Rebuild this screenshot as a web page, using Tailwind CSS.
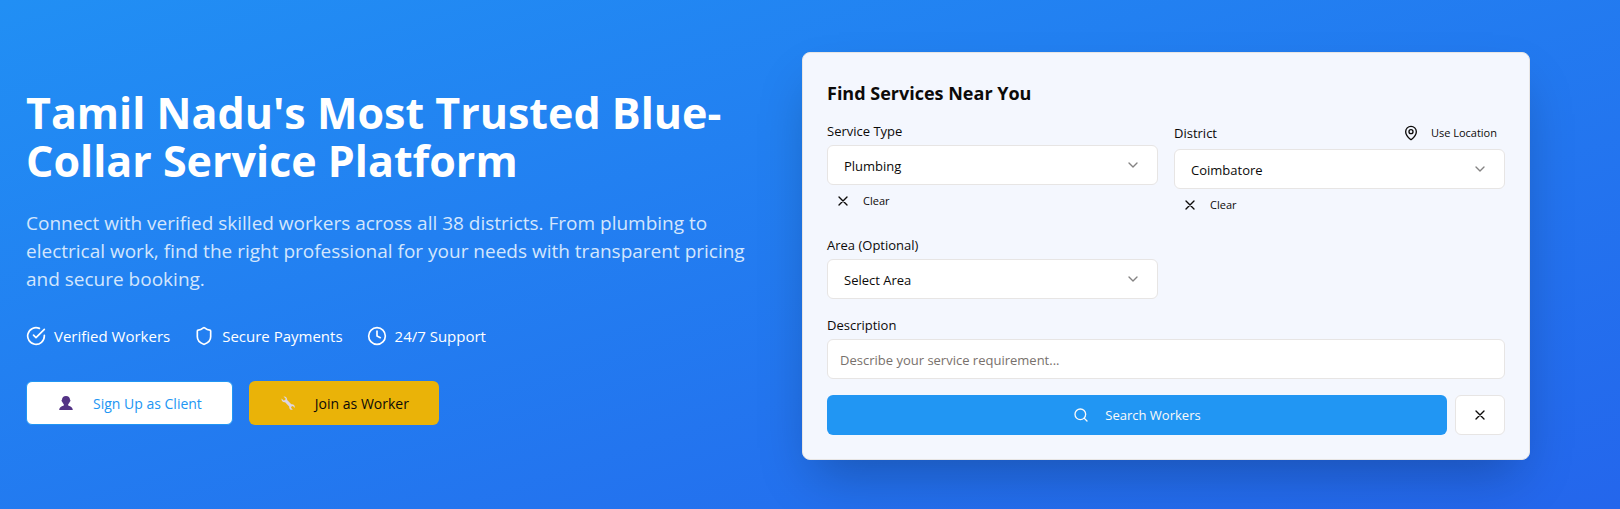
<!DOCTYPE html>
<html lang="en">
<head>
<meta charset="utf-8">
<meta name="viewport" content="width=device-width, initial-scale=1">
<title>Find Services Near You</title>
<script src="https://cdn.jsdelivr.net/npm/@tailwindcss/browser@4"></script>
</head>
<body class="font-['Segoe_UI','Open_Sans',sans-serif] text-[#0c0a09]">
<section class="grid min-h-screen items-center gap-12 bg-linear-to-br/srgb from-[#218ff4] to-[#2466ec] pt-[52px] pr-[90px] pb-[49px] pl-[26px] lg:grid-cols-2">
  <div>
    <h1 class="mb-6 pt-0.5 text-[43px] leading-[48px] font-bold text-white">Tamil Nadu's Most Trusted Blue-Collar Service Platform</h1>
    <p class="mb-[30px] text-[19px] leading-7 text-[#d3e6fd]">Connect with verified skilled workers across all 38 districts. From plumbing to electrical work, find the right professional for your needs with transparent pricing and secure booking.</p>
    <ul class="mb-8 flex flex-wrap gap-6 text-[15px] leading-[26px] text-white">
      <li class="flex items-center gap-2">
        <svg class="size-5 shrink-0" viewBox="0 0 24 24" fill="none" stroke="currentColor" stroke-width="2" stroke-linecap="round" stroke-linejoin="round" aria-hidden="true"><path d="M22 11.08V12a10 10 0 1 1-5.93-9.14"/><path d="m9 11 3 3L22 4"/></svg>
        Verified Workers
      </li>
      <li class="flex items-center gap-2">
        <svg class="size-5 shrink-0" viewBox="0 0 24 24" fill="none" stroke="currentColor" stroke-width="2" stroke-linecap="round" stroke-linejoin="round" aria-hidden="true"><path d="M20 13c0 5-3.5 7.5-7.66 8.95a1 1 0 0 1-.67-.01C7.5 20.5 4 18 4 13V6a1 1 0 0 1 1-1c2 0 4.5-1.2 6.24-2.72a1.17 1.17 0 0 1 1.52 0C14.51 3.81 17 5 19 5a1 1 0 0 1 1 1z"/></svg>
        Secure Payments
      </li>
      <li class="flex items-center gap-2">
        <svg class="size-5 shrink-0" viewBox="0 0 24 24" fill="none" stroke="currentColor" stroke-width="2" stroke-linecap="round" stroke-linejoin="round" aria-hidden="true"><circle cx="12" cy="12" r="10"/><path d="M12 6v6l4 2"/></svg>
        24/7 Support
      </li>
    </ul>
    <div class="flex flex-wrap gap-4 text-[14px]">
      <button type="button" class="flex h-11 items-center gap-[18px] rounded-md border border-[#2196f3] bg-white px-[30px] text-[#2196f3]">
        <svg class="h-[18px] w-[18px]" viewBox="0 0 18 18" aria-hidden="true"><path fill="#533285" d="M9 2C6.5 2 5 3.600 5 5.800c-.6.1-.7 1.600.3 2.100.3 1 .9 1.800 1.500 2.300v1.200C5.500 12.300 2.500 12.200 2.200 16h13.600c-.3-3.800-3.300-3.700-4.600-4.600v-1.200c.6-.5 1.200-1.300 1.500-2.300 1-.5.9-2 .3-2.100C13 3.600 11.500 2 9 2z"/></svg>
        Sign Up as Client
      </button>
      <button type="button" class="flex h-11 items-center gap-[18px] rounded-md bg-[#eab308] px-[30px] text-[#0c0a09]">
        <svg class="h-[18px] w-[18px]" viewBox="0 0 18 18" aria-hidden="true"><path fill="#ddd5e3" d="M4.500 2.600 6.700 4.700 6.100 6.100 4.600 6.500 2.600 4.500C2 6.500 3.600 8.500 6.100 8.200L10.200 12.400C9.900 14.600 11.600 16.300 13.800 15.700L12 13.800 12.500 12.400 13.900 12 15.700 13.900C16.300 11.700 14.500 9.900 12.300 10.300L8.200 6.100C8.400 4 6.600 2.100 4.500 2.600z"/></svg>
        Join as Worker
      </button>
    </div>
  </div>

  <form class="rounded-lg border border-[#e7e5e4] bg-[#f4f7fe] p-6 text-[13px] leading-5 shadow-2xl">
    <h2 class="mb-3 text-[18px] leading-8 font-bold">Find Services Near You</h2>
    <div class="mb-4 grid gap-x-4 gap-y-[18px] sm:grid-cols-2">
      <div>
        <label for="service" class="mb-1 block">Service Type</label>
        <div class="relative">
          <select id="service" class="h-10 w-full appearance-none rounded-md border border-[#e7e5e4] bg-white pt-0.5 pr-10 pl-4"><option>Plumbing</option></select>
          <svg class="pointer-events-none absolute top-3 right-[17px] size-4 opacity-50" viewBox="0 0 24 24" fill="none" stroke="currentColor" stroke-width="2" stroke-linecap="round" stroke-linejoin="round" aria-hidden="true"><path d="m6 9 6 6 6-6"/></svg>
        </div>
        <button type="button" class="mt-1 flex h-6 items-center gap-3 px-2 text-[11px]">
          <svg class="size-4" viewBox="0 0 24 24" fill="none" stroke="currentColor" stroke-width="2" stroke-linecap="round" stroke-linejoin="round" aria-hidden="true"><path d="M18 6 6 18M6 6l12 12"/></svg>
          Clear
        </button>
      </div>
      <div>
        <div class="mb-1 flex h-6 items-center justify-between">
          <label for="district">District</label>
          <button type="button" class="flex h-6 items-center gap-3 px-2 text-[11px]">
            <svg class="size-4" viewBox="0 0 24 24" fill="none" stroke="currentColor" stroke-width="2" stroke-linecap="round" stroke-linejoin="round" aria-hidden="true"><path d="M20 10c0 4.993-5.539 10.193-7.399 11.799a1 1 0 0 1-1.202 0C9.539 20.193 4 14.993 4 10a8 8 0 0 1 16 0"/><circle cx="12" cy="10" r="3"/></svg>
            Use Location
          </button>
        </div>
        <div class="relative">
          <select id="district" class="h-10 w-full appearance-none rounded-md border border-[#e7e5e4] bg-white pt-0.5 pr-10 pl-4"><option>Coimbatore</option></select>
          <svg class="pointer-events-none absolute top-3 right-[17px] size-4 opacity-50" viewBox="0 0 24 24" fill="none" stroke="currentColor" stroke-width="2" stroke-linecap="round" stroke-linejoin="round" aria-hidden="true"><path d="m6 9 6 6 6-6"/></svg>
        </div>
        <button type="button" class="mt-1 flex h-6 items-center gap-3 px-2 text-[11px]">
          <svg class="size-4" viewBox="0 0 24 24" fill="none" stroke="currentColor" stroke-width="2" stroke-linecap="round" stroke-linejoin="round" aria-hidden="true"><path d="M18 6 6 18M6 6l12 12"/></svg>
          Clear
        </button>
      </div>
      <div>
        <label for="area" class="mb-1 block">Area (Optional)</label>
        <div class="relative">
          <select id="area" class="h-10 w-full appearance-none rounded-md border border-[#e7e5e4] bg-white pt-0.5 pr-10 pl-4"><option>Select Area</option></select>
          <svg class="pointer-events-none absolute top-3 right-[17px] size-4 opacity-50" viewBox="0 0 24 24" fill="none" stroke="currentColor" stroke-width="2" stroke-linecap="round" stroke-linejoin="round" aria-hidden="true"><path d="m6 9 6 6 6-6"/></svg>
        </div>
      </div>
    </div>
    <label for="description" class="mb-1 block">Description</label>
    <input id="description" type="text" placeholder="Describe your service requirement..." class="mb-4 block h-10 w-full rounded-md border border-[#e7e5e4] bg-white px-3 pt-0.5 placeholder:text-[#78716c]">
    <div class="flex gap-2">
      <button type="submit" class="flex h-10 flex-1 items-center justify-center gap-4 rounded-md bg-[#2196f3] text-[#fafaf9]">
        <svg class="size-4" viewBox="0 0 24 24" fill="none" stroke="currentColor" stroke-width="2" stroke-linecap="round" stroke-linejoin="round" aria-hidden="true"><circle cx="11" cy="11" r="8"/><path d="m21 21-4.300-4.300"/></svg>
        Search Workers
      </button>
      <button type="button" aria-label="Clear all" class="flex h-10 items-center rounded-md border border-[#e7e5e4] bg-white px-4">
        <svg class="size-4" viewBox="0 0 24 24" fill="none" stroke="currentColor" stroke-width="2" stroke-linecap="round" stroke-linejoin="round" aria-hidden="true"><path d="M18 6 6 18M6 6l12 12"/></svg>
      </button>
    </div>
  </form>
</section>
</body>
</html>
